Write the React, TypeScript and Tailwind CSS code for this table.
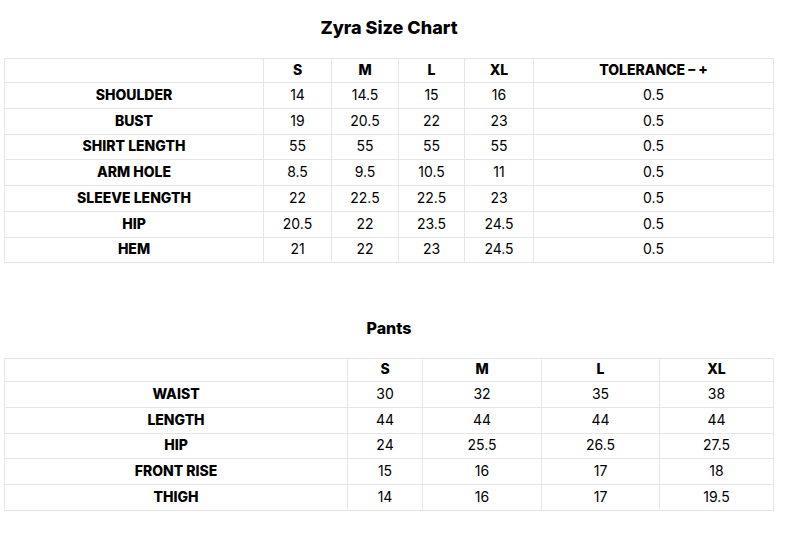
import React from "react";

const font = { fontFamily: "Inter, 'Noto Sans', sans-serif" };

const shirtCols = ["w-[259px]", "w-[68px]", "w-[67px]", "w-[66px]", "w-[69px]", "w-[240px]"];
const shirtRowH = ["h-[24px]", "h-[26px]", "h-[26px]", "h-[25px]", "h-[26px]", "h-[26px]", "h-[26px]", "h-[25px]"];
const shirtRows: string[][] = [
  ["", "S", "M", "L", "XL", "TOLERANCE – +"],
  ["SHOULDER", "14", "14.5", "15", "16", "0.5"],
  ["BUST", "19", "20.5", "22", "23", "0.5"],
  ["SHIRT LENGTH", "55", "55", "55", "55", "0.5"],
  ["ARM HOLE", "8.5", "9.5", "10.5", "11", "0.5"],
  ["SLEEVE LENGTH", "22", "22.5", "22.5", "23", "0.5"],
  ["HIP", "20.5", "22", "23.5", "24.5", "0.5"],
  ["HEM", "21", "22", "23", "24.5", "0.5"],
];

const pantCols = ["w-[343px]", "w-[75px]", "w-[119px]", "w-[118px]", "w-[114px]"];
const pantRowH = ["h-[23px]", "h-[26px]", "h-[26px]", "h-[25px]", "h-[26px]", "h-[26px]"];
const pantRows: string[][] = [
  ["", "S", "M", "L", "XL"],
  ["WAIST", "30", "32", "35", "38"],
  ["LENGTH", "44", "44", "44", "44"],
  ["HIP", "24", "25.5", "26.5", "27.5"],
  ["FRONT RISE", "15", "16", "17", "18"],
  ["THIGH", "14", "16", "17", "19.5"],
];

function Grid({ cols, rowH, rows }: { cols: string[]; rowH: string[]; rows: string[][] }) {
  return (
    <div className="w-[770px] border-t border-l border-[#e6e6e6]">
      {rows.map((r, i) => (
        <div key={i} className="flex">
          {r.map((c, j) => {
            const bold = i === 0 || j === 0;
            return (
              <div
                key={j}
                className={`${cols[j]} ${rowH[i]} shrink-0 border-r border-b border-[#e6e6e6] flex items-center justify-center pb-[2px] text-[14px] leading-none text-black ${
                  bold ? "font-extrabold" : "font-normal"
                }`}
              >
                {c}
              </div>
            );
          })}
        </div>
      ))}
    </div>
  );
}

export default function App() {
  return (
    <div className="w-[786px] h-[535px] bg-white pl-[4px]" style={font}>
      <div className="w-[770px] pt-[14px] h-[58px]">
        <div className="text-center text-[18px] leading-[27px] font-extrabold text-black">Zyra Size Chart</div>
      </div>
      <Grid cols={shirtCols} rowH={shirtRowH} rows={shirtRows} />
      <div className="w-[770px] h-[95px] pt-[53px]">
        <div className="text-center text-[16px] leading-[24px] font-extrabold text-black">Pants</div>
      </div>
      <Grid cols={pantCols} rowH={pantRowH} rows={pantRows} />
    </div>
  );
}
